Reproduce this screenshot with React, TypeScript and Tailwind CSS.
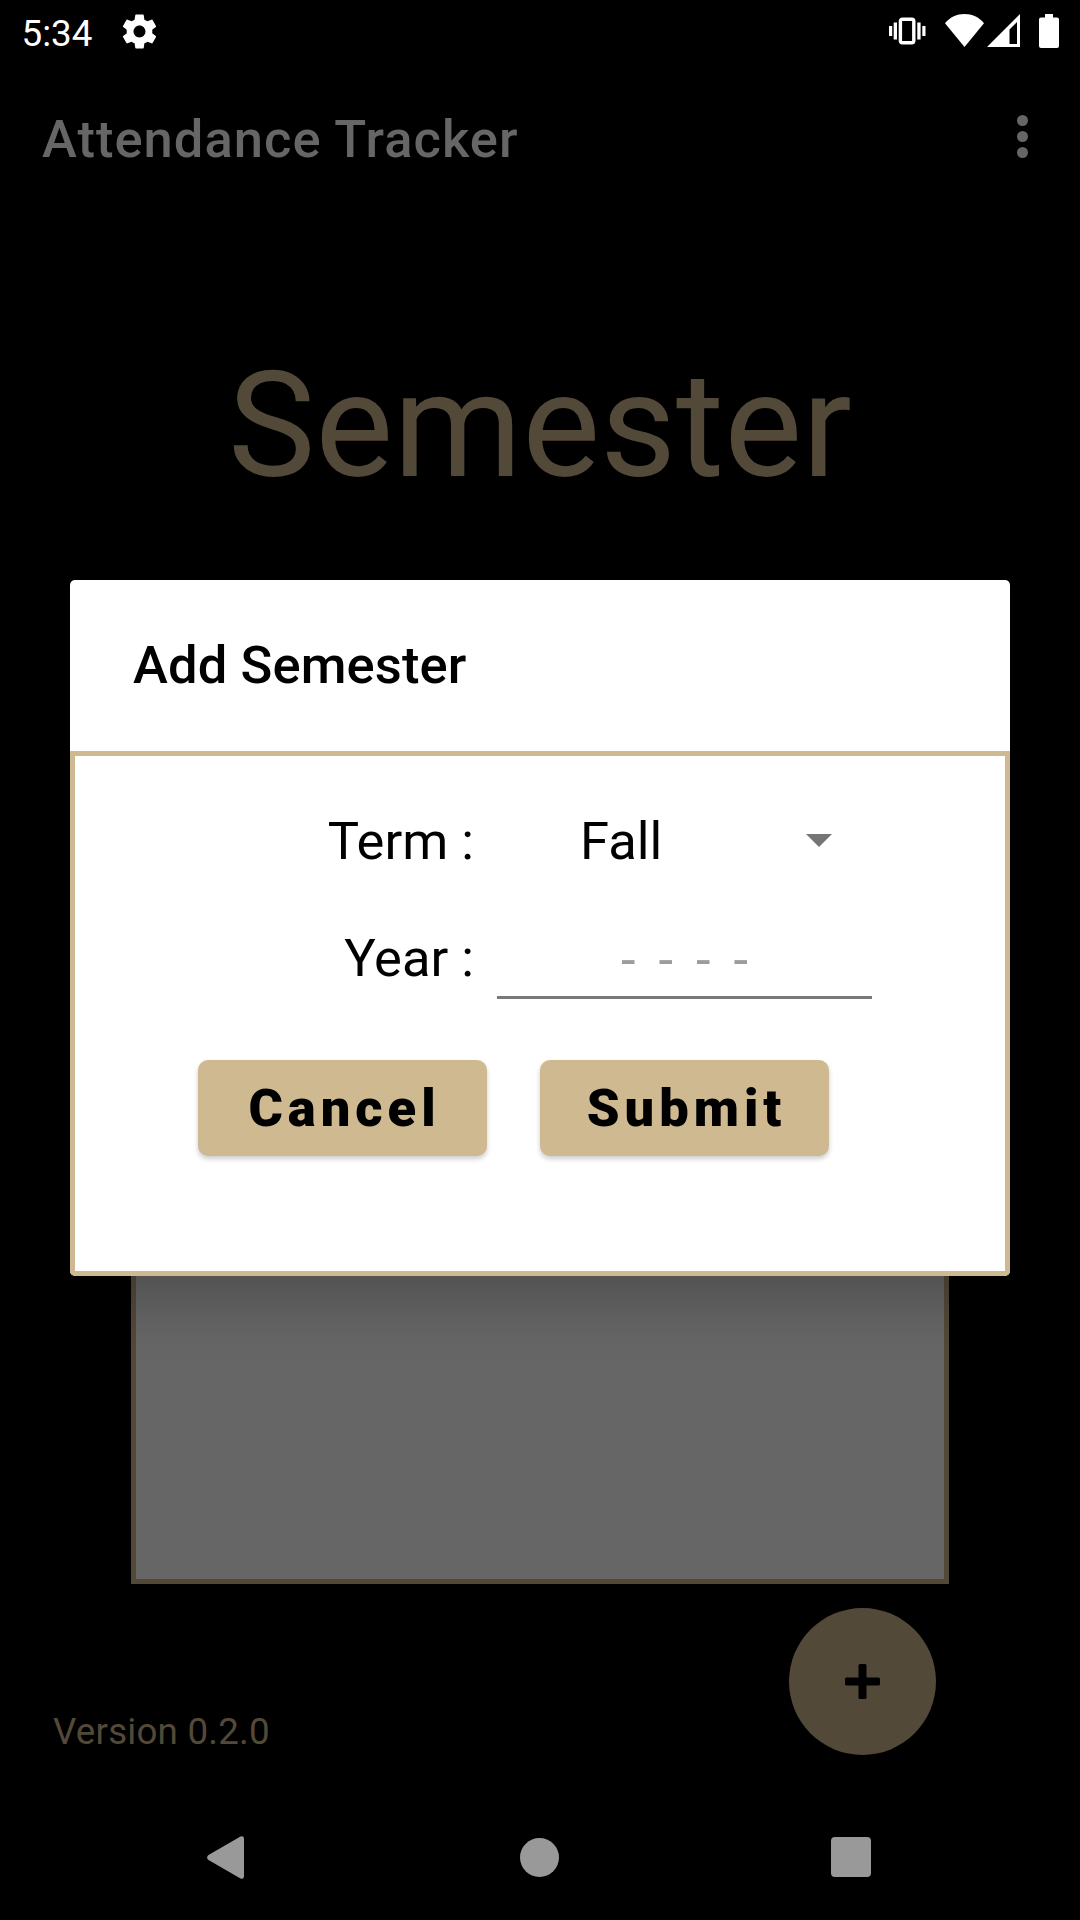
import React from "react";

function StatusBar() {
  return (
    <div className="flex h-[63px] items-start justify-between pl-[21.5px] pr-[21px] text-white">
      <div className="flex items-start">
        <span className="mt-px w-[97.5px] text-[36.75px] leading-[66px]">5:34</span>
        <svg className="mt-[11px] size-[41px]" viewBox="0 0 24 24" fill="currentColor">
          <path d="M19.43 12.98c.04-.32.07-.64.07-.98s-.03-.66-.07-.98l2.11-1.65c.19-.15.24-.42.12-.64l-2-3.46c-.12-.22-.39-.3-.61-.22l-2.49 1c-.52-.4-1.08-.73-1.69-.98l-.38-2.65A.488.488 0 0 0 14 2h-4c-.25 0-.46.18-.49.42l-.38 2.65c-.61.25-1.17.59-1.69.98l-2.49-1c-.23-.09-.49 0-.61.22l-2 3.46c-.13.22-.07.49.12.64l2.11 1.65c-.04.32-.07.65-.07.98s.03.66.07.98l-2.11 1.65c-.19.15-.24.42-.12.64l2 3.46c.12.22.39.3.61.22l2.49-1c.52.4 1.08.73 1.69.98l.38 2.65c.03.24.24.42.49.42h4c.25 0 .46-.18.49-.42l.38-2.65c.61-.25 1.17-.59 1.69-.98l2.49 1c.23.09.49 0 .61-.22l2-3.46c.12-.22.07-.49-.12-.64l-2.11-1.65zM12 15.5c-1.93 0-3.5-1.57-3.5-3.5s1.57-3.5 3.5-3.5 3.5 1.57 3.5 3.5-1.57 3.5-3.5 3.5z" />
        </svg>
      </div>
      <div className="flex items-start pt-[14px]">
        <svg className="mr-[19px] mt-[3px] h-[28px] w-[37px]" viewBox="0 0 37 28" fill="currentColor">
          <rect x="0" y="9" width="3.2" height="10" />
          <rect x="4.7" y="5.5" width="3.3" height="17" />
          <rect x="11.4" y="2.2" width="13.4" height="23.6" rx="2" fill="none" stroke="currentColor" strokeWidth="3.4" />
          <rect x="28.3" y="5.5" width="3.3" height="17" />
          <rect x="33.3" y="9" width="3.2" height="10" />
        </svg>
        <svg className="mr-[3px] h-[33px] w-[39px]" viewBox="0 0 39 33" fill="currentColor">
          <path d="M0 9.2C5 3 12 0 19.5 0S34 3 39 9.2L19.5 33z" />
        </svg>
        <svg className="mr-[19px] h-[33px] w-[33px]" viewBox="0 0 33 33" fill="currentColor">
          <path fillRule="evenodd" d="M33 0v33H0zM30 8l-7.5 7.5V30H30z" />
        </svg>
        <svg className="h-[34px] w-[20px]" viewBox="0 0 20 34" fill="currentColor">
          <path d="M6 0h8v3.5h4a2 2 0 0 1 2 2V32a2 2 0 0 1-2 2H2a2 2 0 0 1-2-2V5.5a2 2 0 0 1 2-2h4z" />
        </svg>
      </div>
    </div>
  );
}

function AppBar() {
  return (
    <div className="flex h-[147px] items-center justify-between pl-[42px] pr-[52px] text-[#666666]">
      <h1 className="pt-[4px] text-[52.5px] font-medium leading-[60px] tracking-[1.02px]">Attendance Tracker</h1>
      <div className="flex flex-col gap-[5px]">
        <span className="size-[11px] rounded-full bg-[#666666]" />
        <span className="size-[11px] rounded-full bg-[#666666]" />
        <span className="size-[11px] rounded-full bg-[#666666]" />
      </div>
    </div>
  );
}

function ActionButton({ label }: { label: string }) {
  return (
    <button className="flex h-[96px] w-[289px] items-center justify-center rounded-[10px] bg-[#cfb991] pb-px pl-[4px] text-[52.5px] font-black leading-[60px] tracking-[0.095em] shadow-[0_3px_5px_rgba(0,0,0,0.2)]">
      {label}
    </button>
  );
}

function AddSemesterDialog() {
  return (
    <div className="absolute left-[70px] top-[580px] flex h-[696px] w-[940px] flex-col overflow-hidden rounded-[5px] bg-white text-black">
      <h2 className="h-[171px] pl-[63px] text-[52.5px] font-medium leading-[170px] tracking-[0.13px]">Add Semester</h2>
      <div className="flex flex-1 flex-col rounded-b-[5px] border-[5px] border-[#cfb991] text-[52.5px]">
        <div className="flex h-[117px] pt-[28px] leading-[114px]">
          <label className="w-[399px] text-right">Term :</label>
          <span className="ml-[106px]">Fall</span>
          <svg className="ml-auto mr-[173px] mt-[50px] h-[13px] w-[26px]" viewBox="0 0 26 13" fill="#757575">
            <path d="M0 0h26L13 13z" />
          </svg>
        </div>
        <div className="flex h-[187px] pt-[28px]">
          <label className="w-[399px] text-right leading-[114px]">Year :</label>
          <div className="ml-[23px] h-[98px] w-[375px] border-b-[3px] border-[#7a7a7a] text-center leading-[118px] text-[#9c9c9c] [word-spacing:10px]">
            - - - -
          </div>
        </div>
        <div className="flex gap-[53px] pl-[123px]">
          <ActionButton label="Cancel" />
          <ActionButton label="Submit" />
        </div>
      </div>
    </div>
  );
}

function NavBar() {
  return (
    <div className="flex h-[126px] items-center pl-[207px]">
      <svg className="h-[43px] w-[37px]" viewBox="0 0 37 43" fill="#999999">
        <path d="M33.5.5 1.5 19a3 3 0 0 0 0 5l32 18.5q3.5 1 3.5-2.5V3q0-3.5-3.5-2.5z" />
      </svg>
      <span className="ml-[276px] size-[39px] rounded-full bg-[#999999]" />
      <span className="ml-[272px] size-[40px] rounded-[4px] bg-[#999999]" />
    </div>
  );
}

export default function App() {
  return (
    <div className="relative flex h-[1920px] w-[1080px] flex-col overflow-hidden bg-black font-[Roboto,sans-serif]">
      <StatusBar />
      <AppBar />
      <div className="h-[432px] text-center text-[147px] leading-[432px] text-[#534938]">Semester</div>
      <div className="mx-[131px] flex h-[942px] flex-col border-[5px] border-[#534938] bg-[#666666]" />
      <div className="flex h-[210px] justify-between pl-[53px] pr-[144px] pt-[24px] text-[#534938]">
        <span className="pt-[102px] text-[36.75px] leading-[44px] tracking-[0.2px]">Version 0.2.0</span>
        <button className="flex size-[147px] items-center justify-center rounded-full bg-[#534938]">
          <svg className="size-[35px]" viewBox="0 0 35 35" fill="#000000">
            <rect x="13.5" y="0" width="8" height="35" rx="1.5" />
            <rect x="0" y="13.5" width="35" height="8" rx="1.5" />
          </svg>
        </button>
      </div>
      <NavBar />
      <div className="absolute left-[131px] top-[1276px] h-[90px] w-[818px] bg-[linear-gradient(to_bottom,rgba(0,0,0,0.19),rgba(0,0,0,0.13)_22%,rgba(0,0,0,0.07)_45%,rgba(0,0,0,0.02)_72%,transparent)]" />
      <AddSemesterDialog />
    </div>
  );
}
